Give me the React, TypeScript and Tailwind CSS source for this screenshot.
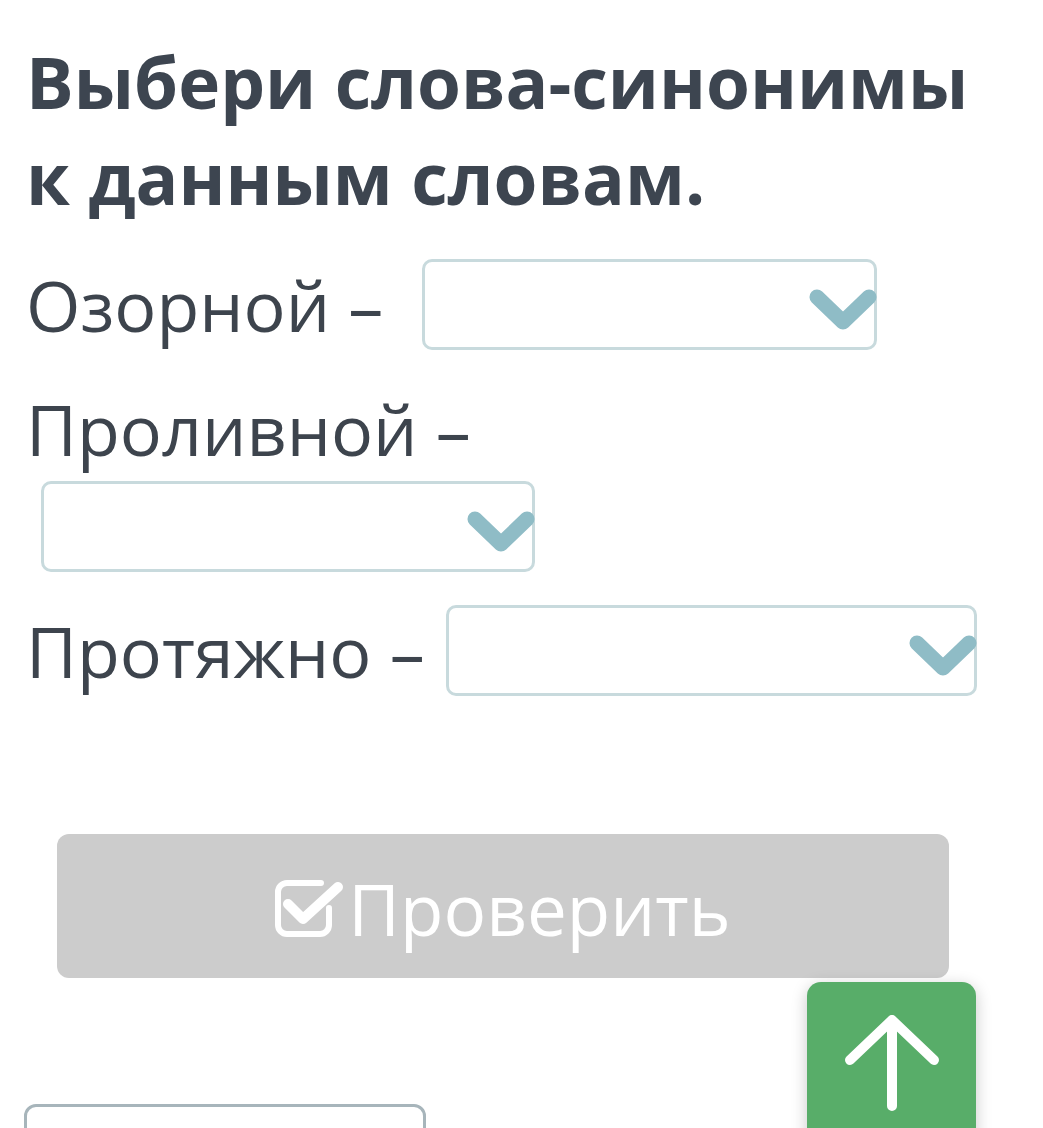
import React from "react";

const Chevron = () => (
  <svg width="68" height="44" viewBox="0 0 68 44" className="mt-[11px] -mr-[3px]">
    <polyline points="8,9 34,34 60,9" fill="none" stroke="#8fbcc6" strokeWidth="15" strokeLinecap="round" strokeLinejoin="round" />
  </svg>
);

const Select = ({ w }: { w: string }) => (
  <div className={`${w} h-[91px] shrink-0 rounded-[10px] border-[3px] border-[#c8dadd] bg-white flex items-center justify-end`}>
    <Chevron />
  </div>
);

export default function App() {
  return (
    <div className="relative w-[1043px] h-[1128px] overflow-hidden bg-white text-[#3d444d]" style={{ fontFamily: '"Open Sans", "Noto Sans", sans-serif' }}>
      <div className="pl-[26px] pt-[34px]">
        <h1 className="text-[71px] leading-[96px] font-bold text-[#3d4550]">
          Выбери слова-синонимы
          <br />к данным словам.
        </h1>
        <div className="mt-[33px] flex items-center h-[91px]">
          <span className="text-[70px] leading-[72px] whitespace-nowrap">Озорной –</span>
          <div className="ml-[39px]">
            <Select w="w-[455px]" />
          </div>
        </div>
        <div className="mt-[43px] text-[70px] leading-[72px] whitespace-nowrap">Проливной –</div>
        <div className="mt-[16px] ml-[15px]">
          <Select w="w-[494px]" />
        </div>
        <div className="mt-[33px] flex items-center h-[91px]">
          <span className="text-[70px] leading-[72px] whitespace-nowrap">Протяжно –</span>
          <div className="ml-[21px]">
            <Select w="w-[531px]" />
          </div>
        </div>
      </div>
      <div className="mt-[138px] ml-[57px] w-[892px] h-[144px] rounded-[12px] bg-[#cccccc] flex items-center justify-center text-white">
        <svg width="68" height="58" viewBox="0 0 68 58" className="mr-[5px] mt-[4px]">
          <path d="M46 4 H12 a9 9 0 0 0 -9 9 V46 a9 9 0 0 0 9 9 H45 a9 9 0 0 0 9 -9 V29" fill="none" stroke="#fff" strokeWidth="6" strokeLinecap="round" />
          <polyline points="13,25 28,40 63,8" fill="none" stroke="#fff" strokeWidth="10" strokeLinecap="round" strokeLinejoin="round" />
        </svg>
        <span className="text-[71px] leading-[72px] mt-[6px]">Проверить</span>
      </div>
      <div className="mt-[126px] ml-[24px] w-[402px] h-[80px] rounded-[12px] border-[3px] border-[#a7b5bb]" />
      <div className="absolute left-[807px] top-[982px] w-[169px] h-[170px] rounded-[14px] bg-[#58ad69] shadow-[0_4px_16px_rgba(0,0,0,0.22)] flex items-start justify-center">
        <svg width="100" height="100" viewBox="0 0 100 100" className="mt-[32px]">
          <path d="M50 6 V92 M8 46 L50 6 L92 46" fill="none" stroke="#fff" strokeWidth="10" strokeLinecap="round" strokeLinejoin="round" />
        </svg>
      </div>
    </div>
  );
}
